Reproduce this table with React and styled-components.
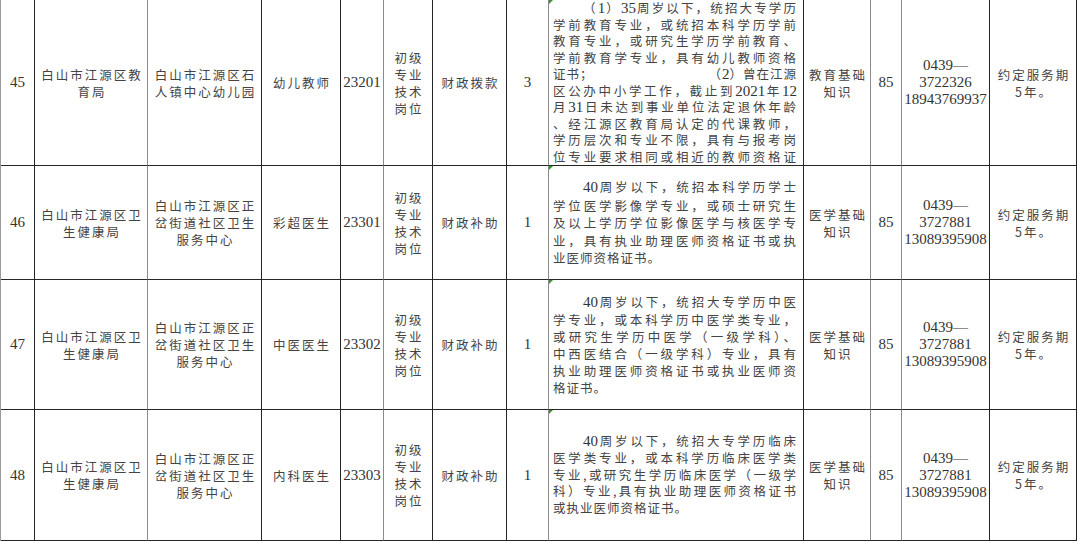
import React from "react";
import styled, { createGlobalStyle } from "styled-components";

const GlobalStyle = createGlobalStyle`
  html, body {
    margin: 0;
    padding: 0;
    background: #fff;
  }
  body {
    width: 1080px;
    height: 542px;
    overflow: hidden;
    font-family: "Liberation Serif", "Noto Sans CJK SC", serif;
    color: #3a3a3a;
  }
`;

const widths = [34, 113, 114, 79, 43, 49, 74, 42, 255, 67, 31, 88, 87];

const rows = [
  {
    no: "45",
    height: 166,
    lineH: 16.5,
    dept: ["白山市江源区教", "育局"],
    unit: ["白山市江源区石", "人镇中心幼儿园"],
    post: "幼儿教师",
    code: "23201",
    fund: "财政拨款",
    count: "3",
    desc: [
      "（1）35周岁以下，统招大专学历",
      "学前教育专业，或统招本科学历学前",
      "教育专业，或研究生学历学前教育、",
      "学前教育学专业，具有幼儿教师资格",
      ["证书；", "（2）曾在江源"],
      "区公办中小学工作，截止到2021年12",
      "月31日未达到事业单位法定退休年龄",
      "、经江源区教育局认定的代课教师，",
      "学历层次和专业不限，具有与报考岗",
      "位专业要求相同或相近的教师资格证",
    ],
    fullLast: true,
    exam: ["教育基础", "知识"],
    ratio: "85",
    phone: ["0439—", "3722326", "18943769937"],
  },
  {
    no: "46",
    height: 114,
    lineH: 17.4,
    dept: ["白山市江源区卫", "生健康局"],
    unit: ["白山市江源区正", "岔街道社区卫生", "服务中心"],
    post: "彩超医生",
    code: "23301",
    fund: "财政补助",
    count: "1",
    desc: [
      "40周岁以下，统招本科学历学士",
      "学位医学影像学专业，或硕士研究生",
      "及以上学历学位影像医学与核医学专",
      "业，具有执业助理医师资格证书或执",
      "业医师资格证书。",
    ],
    exam: ["医学基础", "知识"],
    ratio: "85",
    phone: ["0439—", "3727881", "13089395908"],
  },
  {
    no: "47",
    height: 130,
    lineH: 17,
    dept: ["白山市江源区卫", "生健康局"],
    unit: ["白山市江源区正", "岔街道社区卫生", "服务中心"],
    post: "中医医生",
    code: "23302",
    fund: "财政补助",
    count: "1",
    desc: [
      "40周岁以下，统招大专学历中医",
      "学专业，或本科学历中医学类专业，",
      "或研究生学历中医学（一级学科）、",
      "中西医结合（一级学科）专业，具有",
      "执业助理医师资格证书或执业医师资",
      "格证书。",
    ],
    exam: ["医学基础", "知识"],
    ratio: "85",
    phone: ["0439—", "3727881", "13089395908"],
  },
  {
    no: "48",
    height: 131,
    lineH: 16.8,
    dept: ["白山市江源区卫", "生健康局"],
    unit: ["白山市江源区正", "岔街道社区卫生", "服务中心"],
    post: "内科医生",
    code: "23303",
    fund: "财政补助",
    count: "1",
    desc: [
      "40周岁以下，统招大专学历临床",
      "医学类专业，或本科学历临床医学类",
      "专业,或研究生学历临床医学（一级学",
      "科）专业,具有执业助理医师资格证书",
      "或执业医师资格证书。",
    ],
    exam: ["医学基础", "知识"],
    ratio: "85",
    phone: ["0439—", "3727881", "13089395908"],
  },
];

const Sheet = styled.table`
  border-collapse: separate;
  border-spacing: 0;
  table-layout: fixed;
  width: 1077px;
  border-left: 1px solid #9a9a9a;
`;

const Row = styled.tr`
  height: ${(p) => p.$h}px;
`;

const Cell = styled.td`
  position: relative;
  padding: 0;
  text-align: center;
  vertical-align: middle;
  border-right: 1px solid ${(p) => (p.$soft ? "#8a8a8a" : "#262626")};
  border-bottom: 1px solid #262626;
  overflow: hidden;
`;

const Label = styled.div`
  font-family: "Noto Sans CJK SC", sans-serif;
  font-size: 12.5px;
  line-height: 17px;
  letter-spacing: 2px;
  padding-left: 2px;
  color: #444;
  white-space: nowrap;
`;

const Num = styled.div`
  font-family: "Liberation Serif", serif;
  font-size: 15px;
  line-height: 17px;
  color: #333;
  white-space: nowrap;
`;

const Digits = styled.span`
  font-family: "Liberation Serif", serif;
  font-size: 15px;
  color: #333;
  letter-spacing: 0;
`;

const DescCell = styled(Cell)`
  text-align: left;
  &::before {
    content: "";
    position: absolute;
    left: 0;
    top: 0;
    border-top: 4px solid #2e9a2e;
    border-right: 4px solid transparent;
  }
`;

const Desc = styled.div`
  padding: 0 6px 0 4px;
  font-family: "Noto Sans CJK SC", sans-serif;
  font-size: 12.5px;
  letter-spacing: 1px;
  color: #444;
`;

const Line = styled.div`
  line-height: ${(p) => p.$lh}px;
  white-space: nowrap;
  text-align: justify;
  text-align-last: ${(p) => (p.$last ? "left" : "justify")};
  text-indent: ${(p) => (p.$indent ? "30px" : "0")};
`;

const SplitLine = styled.div`
  display: flex;
  justify-content: space-between;
  line-height: ${(p) => p.$lh}px;
  white-space: nowrap;
`;

const withNums = (text) =>
  text.split(/(\d+)/).map((part, i) =>
    /^\d+$/.test(part) ? <Digits key={i}>{part}</Digits> : part
  );

const Labels = ({ lines }) =>
  lines.map((l) => <Label key={l}>{l}</Label>);

const Description = ({ lines, fullLast, lineH }) => (
  <Desc>
    {lines.map((line, i) =>
      Array.isArray(line) ? (
        <SplitLine key={i} $lh={lineH}>
          <span>{line[0]}</span>
          <span>{withNums(line[1])}</span>
        </SplitLine>
      ) : (
        <Line
          key={i}
          $lh={lineH}
          $indent={i === 0}
          $last={i === lines.length - 1 && !fullLast}
        >
          {withNums(line)}
        </Line>
      )
    )}
  </Desc>
);

export default function App() {
  return (
    <>
      <GlobalStyle />
      <Sheet>
        <colgroup>
          {widths.map((w, i) => (
            <col key={i} style={{ width: w }} />
          ))}
        </colgroup>
        <tbody>
          {rows.map((r) => (
            <Row key={r.no} $h={r.height}>
              <Cell>
                <Num>{r.no}</Num>
              </Cell>
              <Cell $soft>
                <Labels lines={r.dept} />
              </Cell>
              <Cell>
                <Labels lines={r.unit} />
              </Cell>
              <Cell>
                <Label>{r.post}</Label>
              </Cell>
              <Cell $soft>
                <Num>{r.code}</Num>
              </Cell>
              <Cell>
                <Labels lines={["初级", "专业", "技术", "岗位"]} />
              </Cell>
              <Cell>
                <Label>{r.fund}</Label>
              </Cell>
              <Cell $soft>
                <Num>{r.count}</Num>
              </Cell>
              <DescCell>
                <Description
                  lines={r.desc}
                  fullLast={r.fullLast}
                  lineH={r.lineH}
                />
              </DescCell>
              <Cell $soft>
                <Labels lines={r.exam} />
              </Cell>
              <Cell $soft>
                <Num>{r.ratio}</Num>
              </Cell>
              <Cell>
                {r.phone.map((p) => (
                  <Num key={p}>{p}</Num>
                ))}
              </Cell>
              <Cell>
                <Labels lines={["约定服务期", "5年。"]} />
              </Cell>
            </Row>
          ))}
        </tbody>
      </Sheet>
    </>
  );
}
